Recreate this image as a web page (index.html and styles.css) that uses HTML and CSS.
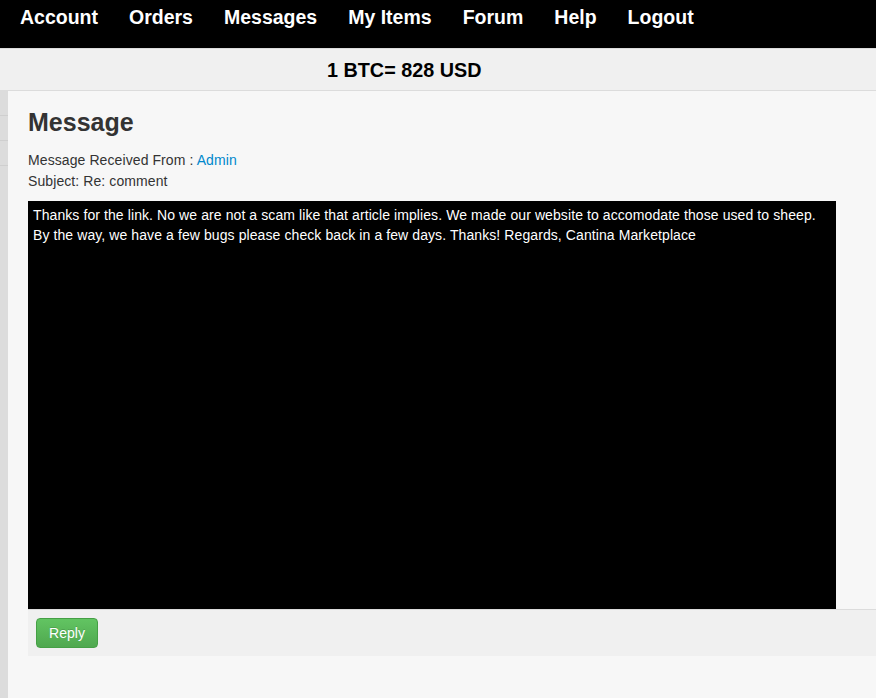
FILE: index.html
```html
<!DOCTYPE html>
<html>
<head>
<meta charset="utf-8">
<title>Message</title>
<link rel="stylesheet" href="styles.css">
</head>
<body>
<nav class="nav">
  <a href="#">Account</a>
  <a href="#">Orders</a>
  <a href="#">Messages</a>
  <a href="#">My Items</a>
  <a href="#">Forum</a>
  <a href="#">Help</a>
  <a href="#">Logout</a>
</nav>
<div class="rate">1 BTC= 828 USD</div>
<div class="main">
  <aside class="side">
    <div class="side-item"></div>
    <div class="side-item"></div>
    <div class="side-item"></div>
  </aside>
  <section class="content">
    <h1 class="title">Message</h1>
    <p class="meta">Message Received From : <a href="#" class="link">Admin</a><br>Subject: Re: comment</p>
    <div class="body">Thanks for the link. No we are not a scam like that article implies. We made our website to accomodate those used to sheep.<br>By the way, we have a few bugs please check back in a few days. Thanks! Regards, Cantina Marketplace</div>
    <div class="actions">
      <button class="btn">Reply</button>
    </div>
  </section>
</div>
</body>
</html>
```
FILE: styles.css
```css
html, body {
  margin: 0;
  padding: 0;
}
body {
  font-family: "Liberation Sans", Arial, sans-serif;
  background: #f7f7f7;
  color: #333;
  min-height: 698px;
}
.nav {
  background: #000;
  height: 42px;
  padding: 6px 0 0 20px;
  display: flex;
  gap: 31px;
  border-bottom: 1px solid #dcdcdc;
}
.nav a {
  color: #fff;
  font-weight: bold;
  font-size: 19.5px;
  line-height: 23px;
  text-decoration: none;
  height: 23px;
}
.rate {
  background: #f0f0f0;
  height: 31px;
  padding: 10px 0 0 327px;
  font-size: 19.8px;
  line-height: 23px;
  font-weight: bold;
  color: #000;
  border-bottom: 1px solid #dcdcdc;
}
.main {
  display: flex;
  min-height: 607px;
}
.side {
  width: 8px;
  background: #dcdcdc;
}
.side-item {
  height: 24px;
  border-bottom: 1px solid #cfcfcf;
}
.content {
  flex: 1;
  background: #f7f7f7;
  padding: 0 0 0 20px;
}
.title {
  margin: 16px 0 0 0;
  font-size: 25px;
  line-height: 30px;
  font-weight: bold;
  color: #333;
}
.meta {
  margin: 13px 0 0 0;
  font-size: 14px;
  line-height: 21px;
  letter-spacing: 0.09px;
  color: #333;
}
.link {
  color: #0088cc;
  text-decoration: none;
}
.body {
  margin-top: 9px;
  width: 798px;
  height: 400px;
  padding: 4px 5px 4px 5px;
  background: #000;
  color: #fff;
  font-size: 14px;
  line-height: 20px;
  letter-spacing: 0.09px;
}
.actions {
  border-top: 1px solid #dcdcdc;
  background: #f0f0f0;
  padding: 8px;
  display: flex;
}
.btn {
  width: 62px;
  height: 30px;
  font-family: "Liberation Sans", Arial, sans-serif;
  font-size: 14px;
  color: #fff;
  background: linear-gradient(#62c462, #4fa84f);
  border: 1px solid #45a045;
  border-radius: 4px;
  padding: 0;
  text-shadow: 0 -1px 0 rgba(0,0,0,0.15);
}
```
